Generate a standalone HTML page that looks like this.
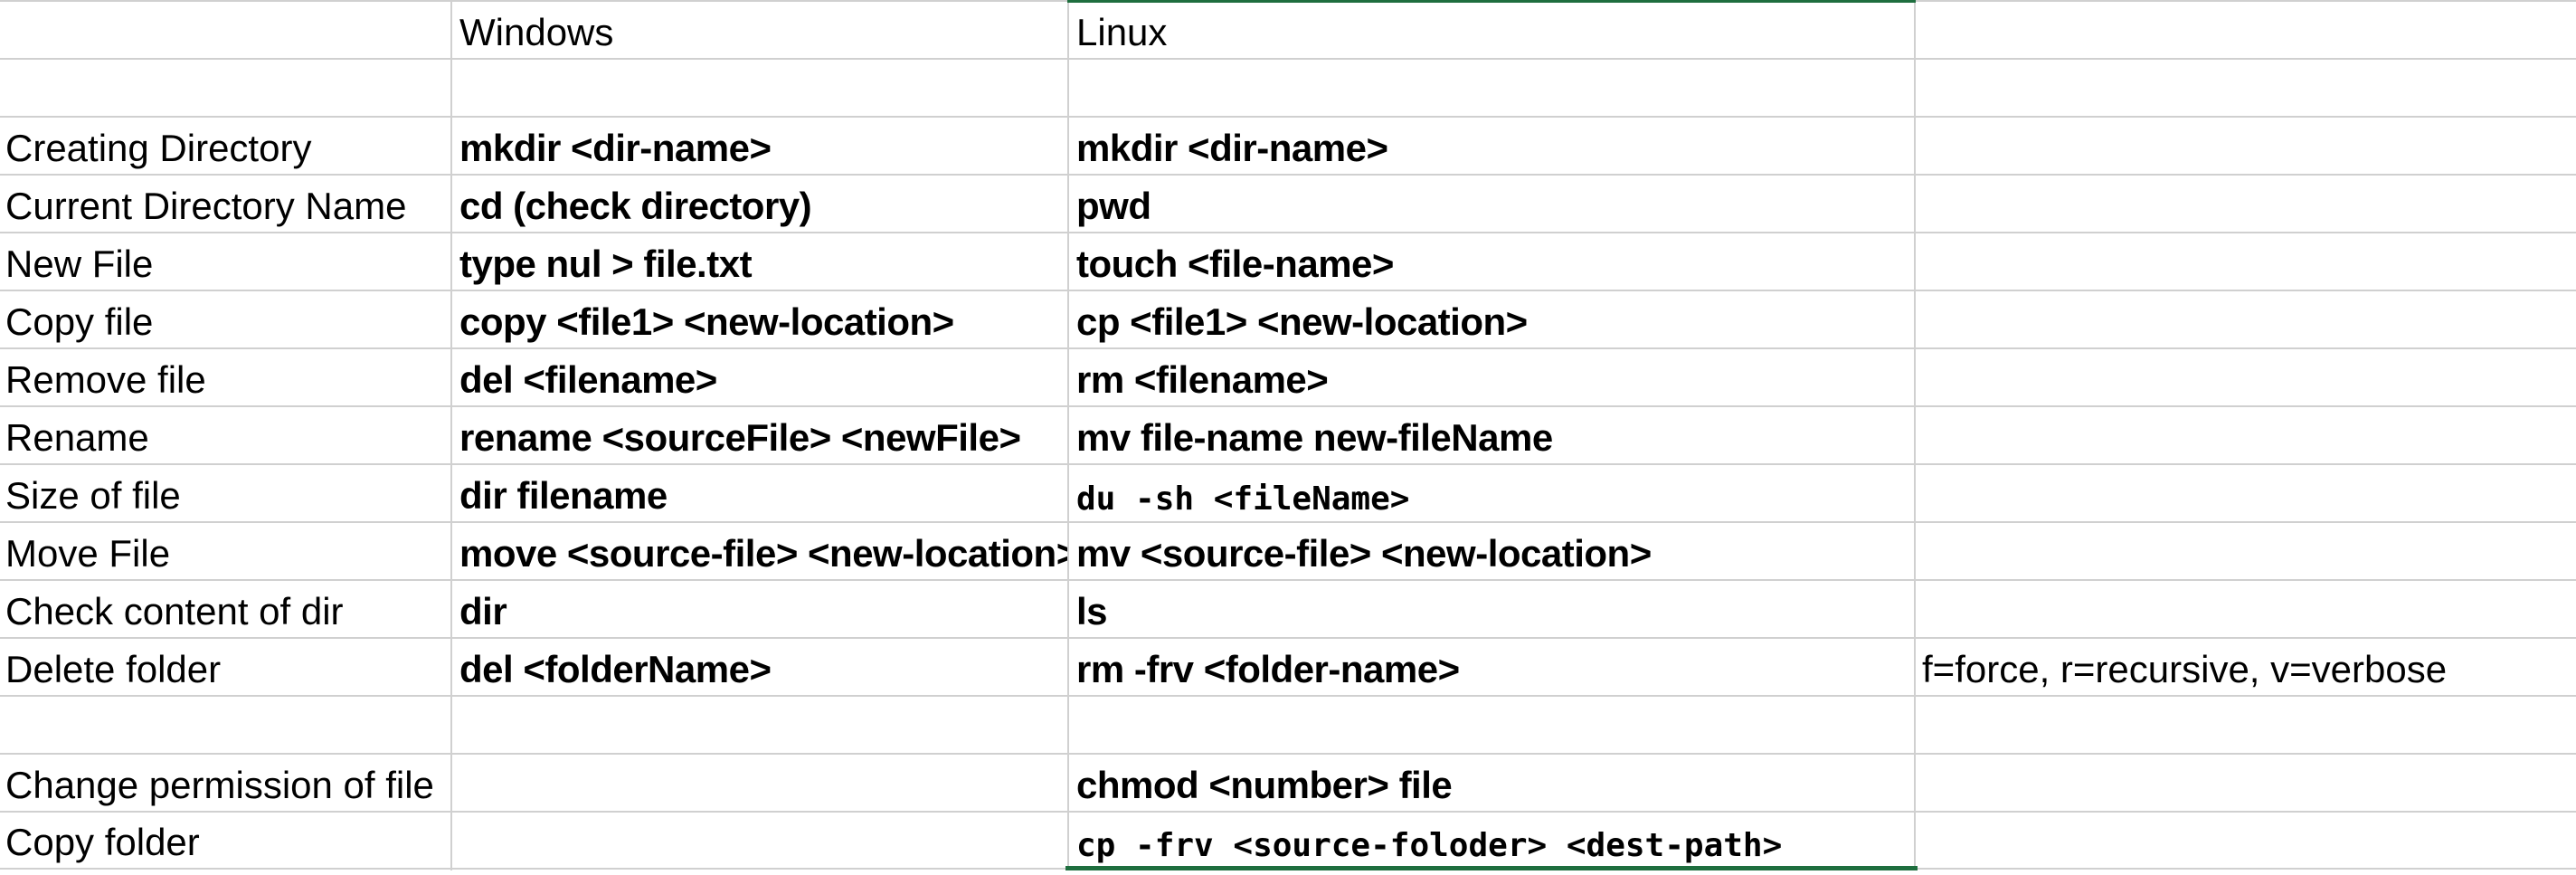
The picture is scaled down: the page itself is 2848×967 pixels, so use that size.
<!DOCTYPE html>
<html><head><meta charset="utf-8"><style>
html,body{margin:0;padding:0;background:#fff;}
body{width:2848px;height:962px;position:relative;overflow:hidden;font-family:"Liberation Sans",Arial,sans-serif;color:#000;}
.h{position:absolute;left:0;width:2848px;height:2px;background:#d0d0d0;}
.v{position:absolute;top:0;height:962px;width:2px;background:#d0d0d0;}
.c{position:absolute;height:64px;line-height:64px;font-size:42px;white-space:nowrap;overflow:hidden;}
.b{font-weight:bold;letter-spacing:-0.5px;}
.m{font-family:"DejaVu Sans Mono","Liberation Mono",monospace;font-weight:bold;font-size:36px;letter-spacing:0;}
.g{position:absolute;background:#1e6e3e;}
</style></head><body>
<div class="h" style="top:0"></div><div class="h" style="top:64px"></div><div class="h" style="top:128px"></div><div class="h" style="top:192px"></div><div class="h" style="top:256px"></div><div class="h" style="top:320px"></div><div class="h" style="top:384px"></div><div class="h" style="top:448px"></div><div class="h" style="top:512px"></div><div class="h" style="top:576px"></div><div class="h" style="top:640px"></div><div class="h" style="top:704px"></div><div class="h" style="top:768px"></div><div class="h" style="top:832px"></div><div class="h" style="top:896px"></div><div class="h" style="top:959px"></div>
<div class="v" style="left:498px"></div><div class="v" style="left:1180px"></div><div class="v" style="left:2116px"></div>
<div class="g" style="left:1180px;top:0;width:938px;height:3px"></div>
<div class="g" style="left:1178px;top:957px;width:942px;height:5px"></div>

<div class="c" style="left:508px;top:4px;width:670px">Windows</div>
<div class="c" style="left:1190px;top:4px;width:920px">Linux</div>

<div class="c" style="left:6px;top:132px;width:490px">Creating Directory</div>
<div class="c b" style="left:508px;top:132px;width:672px">mkdir &lt;dir-name&gt;</div>
<div class="c b" style="left:1190px;top:132px;width:920px">mkdir &lt;dir-name&gt;</div>

<div class="c" style="left:6px;top:196px;width:490px">Current Directory Name</div>
<div class="c b" style="left:508px;top:196px;width:672px">cd (check directory)</div>
<div class="c b" style="left:1190px;top:196px;width:920px">pwd</div>

<div class="c" style="left:6px;top:260px;width:490px">New File</div>
<div class="c b" style="left:508px;top:260px;width:672px">type nul &gt; file.txt</div>
<div class="c b" style="left:1190px;top:260px;width:920px">touch &lt;file-name&gt;</div>

<div class="c" style="left:6px;top:324px;width:490px">Copy file</div>
<div class="c b" style="left:508px;top:324px;width:672px">copy &lt;file1&gt; &lt;new-location&gt;</div>
<div class="c b" style="left:1190px;top:324px;width:920px">cp &lt;file1&gt; &lt;new-location&gt;</div>

<div class="c" style="left:6px;top:388px;width:490px">Remove file</div>
<div class="c b" style="left:508px;top:388px;width:672px">del &lt;filename&gt;</div>
<div class="c b" style="left:1190px;top:388px;width:920px">rm &lt;filename&gt;</div>

<div class="c" style="left:6px;top:452px;width:490px">Rename</div>
<div class="c b" style="left:508px;top:452px;width:672px">rename &lt;sourceFile&gt; &lt;newFile&gt;</div>
<div class="c b" style="left:1190px;top:452px;width:920px">mv file-name new-fileName</div>

<div class="c" style="left:6px;top:516px;width:490px">Size of file</div>
<div class="c b" style="left:508px;top:516px;width:672px">dir filename</div>
<div class="c m" style="left:1190px;top:520px;width:920px">du -sh &lt;fileName&gt;</div>

<div class="c" style="left:6px;top:580px;width:490px">Move File</div>
<div class="c b" style="left:508px;top:580px;width:672px">move &lt;source-file&gt; &lt;new-location&gt;</div>
<div class="c b" style="left:1190px;top:580px;width:920px">mv &lt;source-file&gt; &lt;new-location&gt;</div>

<div class="c" style="left:6px;top:644px;width:490px">Check content of dir</div>
<div class="c b" style="left:508px;top:644px;width:672px">dir</div>
<div class="c b" style="left:1190px;top:644px;width:920px">ls</div>

<div class="c" style="left:6px;top:708px;width:490px">Delete folder</div>
<div class="c b" style="left:508px;top:708px;width:672px">del &lt;folderName&gt;</div>
<div class="c b" style="left:1190px;top:708px;width:920px">rm -frv &lt;folder-name&gt;</div>
<div class="c" style="left:2125px;top:708px;width:720px">f=force, r=recursive, v=verbose</div>

<div class="c" style="left:6px;top:836px;width:490px">Change permission of file</div>
<div class="c b" style="left:1190px;top:836px;width:920px">chmod &lt;number&gt; file</div>

<div class="c" style="left:6px;top:899px;width:490px">Copy folder</div>
<div class="c m" style="left:1190px;top:903px;width:920px">cp -frv &lt;source-foloder&gt; &lt;dest-path&gt;</div>
</body></html>
